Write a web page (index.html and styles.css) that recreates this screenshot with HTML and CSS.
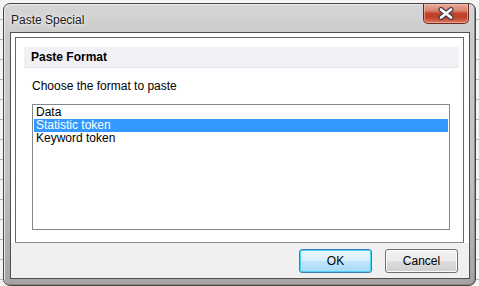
FILE: index.html
```html
<!DOCTYPE html>
<html>
<head>
<meta charset="utf-8">
<link rel="stylesheet" href="styles.css">
</head>
<body>
<div class="window">
  <div class="titlebar">
    <span class="title">Paste Special</span>
    <div class="close">
      <svg width="18" height="13" viewBox="0 0 18 13">
        <path d="M4 2.5 L14 10.5 M14 2.5 L4 10.5" fill="none" stroke="#3a3a4a" stroke-width="5" stroke-linecap="round"/>
        <path d="M4 2.5 L14 10.5 M14 2.5 L4 10.5" fill="none" stroke="#ffffff" stroke-width="2.8" stroke-linecap="round"/>
      </svg>
    </div>
  </div>
  <div class="client">
    <div class="pane">
      <div class="header">Paste Format</div>
      <div class="prompt">Choose the format to paste</div>
      <div class="listbox">
        <div class="item">Data</div>
        <div class="item selected">Statistic token</div>
        <div class="item">Keyword token</div>
      </div>
    </div>
    <div class="buttons">
      <button class="btn default">OK</button>
      <button class="btn">Cancel</button>
    </div>
  </div>
</div>
</body>
</html>
```
FILE: styles.css
```css
html, body {
  margin: 0;
  padding: 0;
}
body {
  width: 479px;
  height: 286px;
  overflow: hidden;
  background-color: #f4f4f4;
  background-image: repeating-linear-gradient(180deg, transparent 0, transparent 19px, #b8b8b8 19px, #b8b8b8 20px);
  font-family: "Liberation Sans", Arial, sans-serif;
  font-size: 12px;
  color: #000;
}
.window {
  box-sizing: border-box;
  margin: 3px 0 0 3px;
  width: 473px;
  height: 283px;
  border: 1px solid #444;
  border-radius: 7px;
  background: linear-gradient(180deg, #d6d6d6 0%, #cbcbcb 12%, #c2c2c2 60%, #a4a4a4 100%);
  padding: 0 5px 6px 6px;
  display: flex;
  flex-direction: column;
  box-shadow: inset 1px 1px 0 #eaeaea, inset -1px -1px 0 #8a8a8a;
}
.titlebar {
  height: 28px;
  display: flex;
  align-items: flex-start;
  flex: none;
}
.title {
  margin-top: 9px;
  padding-left: 1px;
  font-family: "Liberation Sans", Arial, sans-serif;
  font-size: 12px;
  color: #1a1a1a;
  text-shadow: 0 0 6px #f2f2f2, 0 0 3px #ffffff;
}
.close {
  margin-left: auto;
  margin-right: 1px;
  width: 46px;
  height: 20px;
  box-sizing: border-box;
  border: 1px solid #6b2a22;
  border-top: none;
  border-radius: 0 0 5px 5px;
  background: linear-gradient(180deg, #e6a898 0%, #d98670 35%, #c2432c 50%, #c13f28 70%, #dc7a5e 100%);
  box-shadow: inset 0 0 0 1px rgba(255, 210, 200, 0.5);
  display: flex;
  align-items: center;
  justify-content: center;
}
.close svg {
  display: block;
}
.client {
  flex: 1;
  box-sizing: border-box;
  border: 1px solid #505050;
  background: #f0f0f0;
  display: flex;
  flex-direction: column;
}
.pane {
  background: #ffffff;
  padding: 4px 4px 0 4px;
  height: 210px;
  box-sizing: border-box;
  display: flex;
  flex-direction: column;
  position: relative;
}
.pane::before {
  content: "";
  position: absolute;
  left: 4px;
  top: 4px;
  right: 5px;
  bottom: 0;
  border: 1px solid #696969;
  border-bottom-color: #8e8e8e;
  pointer-events: none;
}
.header {
  margin: 10px 6px 0 9px;
  height: 21px;
  line-height: 21px;
  padding-left: 7px;
  background: #f0f0f5;
  border-bottom: 1px solid #e6e6ec;
  font-weight: bold;
  font-size: 12px;
  color: #000;
  box-sizing: border-box;
}
.prompt {
  margin: 11px 0 0 17px;
  line-height: 14px;
  height: 14px;
}
.listbox {
  margin: 11px 15px 0 17px;
  height: 126px;
  box-sizing: border-box;
  border: 1px solid #828790;
  padding: 1px;
  background: #fff;
}
.item {
  height: 13px;
  line-height: 13px;
  padding-left: 2px;
  white-space: nowrap;
}
.item.selected {
  background: #3399ff;
  color: #fff;
}
.buttons {
  display: flex;
  justify-content: flex-end;
  gap: 13px;
  padding: 6px 11px 0 0;
}
.btn {
  width: 73px;
  height: 24px;
  box-sizing: border-box;
  border: 1px solid #707070;
  border-radius: 3px;
  background: linear-gradient(180deg, #f2f2f2 0%, #ebebeb 48%, #dddddd 52%, #cfcfcf 100%);
  box-shadow: inset 0 0 0 1px #fcfcfc;
  font-family: "Liberation Sans", Arial, sans-serif;
  font-size: 12px;
  color: #000;
  padding: 0;
  line-height: 20px;
}
.btn.default {
  border-color: #3c7fb1;
  background: linear-gradient(180deg, #eaf6fd 0%, #d9f0fc 48%, #bee6fd 52%, #a7d9f5 100%);
  box-shadow: inset 0 0 0 1px #48d3f7;
}
```
